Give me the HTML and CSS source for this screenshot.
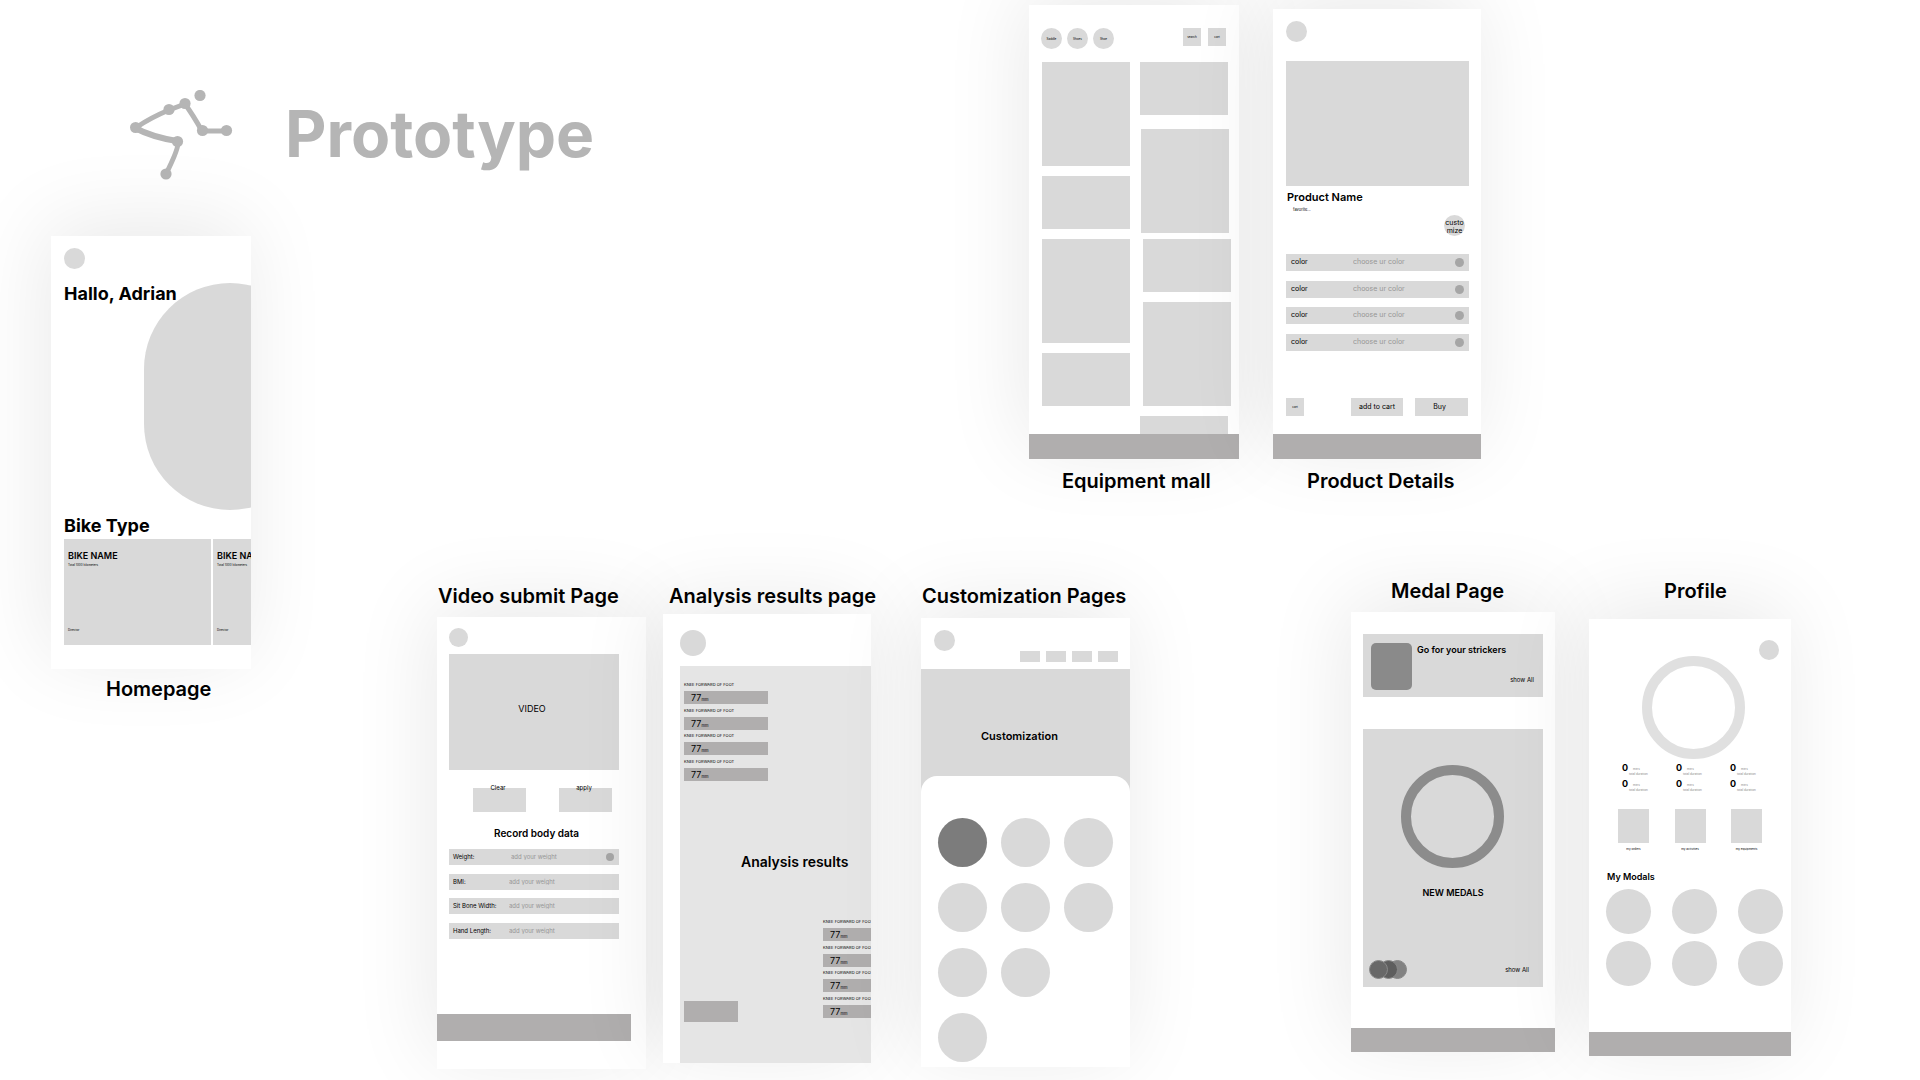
FILE: index.html
```html
<!DOCTYPE html>
<html lang="en">
<head>
<meta charset="utf-8">
<meta name="viewport" content="width=device-width, initial-scale=1">
<title>Prototype</title>
<link rel="stylesheet" href="styles.css">
</head>
<body>
<main class="canvas">
  <header class="brand">
    <svg class="logo" viewBox="0 0 104 92" width="104" height="92" aria-hidden="true">
      <g fill="none" stroke="#b5b5b5" stroke-width="5" stroke-linecap="round" stroke-linejoin="round">
        <path d="M55 14 39 20Q20 28 7 37"/>
        <path d="M5 38Q22 47 47 51" stroke-width="6"/>
        <path d="M48 52Q49 58 36 84"/>
        <path d="M55 14Q63 25 72 41H97"/>
      </g>
      <g fill="#b5b5b5">
        <circle cx="70" cy="5.5" r="5.6"/><circle cx="55" cy="13.5" r="5.6"/><circle cx="39" cy="19.5" r="5.6"/>
        <circle cx="5.6" cy="37.5" r="5.6"/><circle cx="72.5" cy="40.5" r="5.6"/><circle cx="96.5" cy="40.5" r="5.6"/>
        <circle cx="47.5" cy="51.5" r="5.6"/><circle cx="36" cy="84" r="5.6"/>
      </g>
    </svg>
    <h1 class="brand-title">Prototype</h1>
  </header>

  <figure class="frame frame-home">
    <div class="board board-home">
      <span class="avatar"></span>
      <span class="hero-shape"></span>
      <h2 class="greeting">Hallo, Adrian</h2>
      <h2 class="section-title">Bike Type</h2>
      <div class="bikes">
        <article class="bike"><h3 class="item-title">BIKE NAME</h3><p class="micro">Total 1000 kilometers</p><p class="micro bike-foot">Director</p></article>
        <article class="bike"><h3 class="item-title">BIKE NAME</h3><p class="micro">Total 1000 kilometers</p><p class="micro bike-foot">Director</p></article>
      </div>
    </div>
    <figcaption class="caption">Homepage</figcaption>
  </figure>

  <figure class="frame frame-mall">
    <div class="board board-mall">
      <nav class="mall-bar">
        <button class="chip">Saddle</button><button class="chip">Shoes</button><button class="chip">Shoe</button>
        <button class="square square-first">search</button><button class="square">cart</button>
      </nav>
      <div class="goods">
        <div class="goods-col">
          <div class="tile tall"></div><div class="tile"></div><div class="tile tall"></div><div class="tile"></div>
        </div>
        <div class="goods-col goods-right">
          <div class="tile"></div><div class="tile tall second"></div><div class="tile third"></div><div class="tile tall third"></div><div class="tile"></div>
        </div>
      </div>
      <div class="tabbar"></div>
    </div>
    <figcaption class="caption">Equipment mall</figcaption>
  </figure>

  <figure class="frame frame-product">
    <div class="board board-product">
      <span class="avatar"></span>
      <div class="product-image"></div>
      <h2 class="product-name">Product Name</h2>
      <p class="product-note">favorite...</p>
      <button class="customize">custo<br>mize</button>
      <form class="fields product-fields">
        <div class="field"><label for="c1">color</label><input id="c1" placeholder="choose ur color"><span class="dot"></span></div>
        <div class="field"><label for="c2">color</label><input id="c2" placeholder="choose ur color"><span class="dot"></span></div>
        <div class="field"><label for="c3">color</label><input id="c3" placeholder="choose ur color"><span class="dot"></span></div>
        <div class="field"><label for="c4">color</label><input id="c4" placeholder="choose ur color"><span class="dot"></span></div>
      </form>
      <div class="actions">
        <button class="square cart">cart</button><button class="action">add to cart</button><button class="action buy">Buy</button>
      </div>
      <div class="tabbar"></div>
    </div>
    <figcaption class="caption">Product Details</figcaption>
  </figure>

  <figure class="frame frame-video">
    <figcaption class="caption">Video submit Page</figcaption>
    <div class="board board-video">
      <span class="avatar"></span>
      <div class="video">VIDEO</div>
      <div class="video-actions"><button class="video-button">Clear</button><button class="video-button">apply</button></div>
      <h2 class="record-title">Record body data</h2>
      <form class="fields body-fields">
        <div class="field first"><label for="b1">Weight:</label><input id="b1" placeholder="add your weight"><span class="dot"></span></div>
        <div class="field"><label for="b2">BMI:</label><input id="b2" placeholder="add your weight"></div>
        <div class="field"><label for="b3">Sit Bone Width:</label><input id="b3" placeholder="add your weight"></div>
        <div class="field"><label for="b4">Hand Length:</label><input id="b4" placeholder="add your weight"></div>
      </form>
      <div class="tabbar"></div>
    </div>
  </figure>

  <figure class="frame frame-analysis">
    <figcaption class="caption">Analysis results page</figcaption>
    <div class="board board-analysis">
      <span class="avatar"></span>
      <section class="panel">
        <ul class="readings">
          <li>KNEE FORWARD OF FOOT<b>77<small>mm</small></b></li>
          <li>KNEE FORWARD OF FOOT<b>77<small>mm</small></b></li>
          <li>KNEE FORWARD OF FOOT<b>77<small>mm</small></b></li>
          <li>KNEE FORWARD OF FOOT<b>77<small>mm</small></b></li>
        </ul>
        <h2 class="panel-title">Analysis results</h2>
        <div class="panel-foot">
          <span class="panel-box"></span>
          <ul class="readings">
            <li>KNEE FORWARD OF FOOT<b>77<small>mm</small></b></li>
            <li>KNEE FORWARD OF FOOT<b>77<small>mm</small></b></li>
            <li>KNEE FORWARD OF FOOT<b>77<small>mm</small></b></li>
            <li>KNEE FORWARD OF FOOT<b>77<small>mm</small></b></li>
          </ul>
        </div>
      </section>
    </div>
  </figure>

  <figure class="frame frame-custom">
    <figcaption class="caption">Customization Pages</figcaption>
    <div class="board board-custom">
      <div class="custom-bar">
        <span class="avatar"></span>
        <div class="tabs"><span></span><span></span><span></span><span></span></div>
      </div>
      <div class="custom-hero"><h2 class="custom-title">Customization</h2></div>
      <div class="sheet">
        <span class="swatch selected"></span><span class="swatch"></span><span class="swatch"></span>
        <span class="swatch"></span><span class="swatch"></span><span class="swatch"></span>
        <span class="swatch"></span><span class="swatch"></span>
        <span class="swatch row-start"></span>
      </div>
    </div>
  </figure>

  <figure class="frame frame-medal">
    <figcaption class="caption">Medal Page</figcaption>
    <div class="board board-medal">
      <section class="sticker-card">
        <span class="sticker"></span>
        <div class="sticker-text"><h3 class="item-title">Go for your strickers</h3><a class="show-all" href="#stickers">show All</a></div>
      </section>
      <section class="medal-card">
        <span class="ring"></span>
        <h3 class="item-title">NEW MEDALS</h3>
        <div class="medal-foot">
          <div class="coins"><span class="coin"></span><span class="coin"></span><span class="coin"></span></div>
          <a class="show-all" href="#medals">show All</a>
        </div>
      </section>
      <div class="tabbar"></div>
    </div>
  </figure>

  <figure class="frame frame-profile">
    <figcaption class="caption">Profile</figcaption>
    <div class="board board-profile">
      <span class="avatar"></span>
      <span class="ring"></span>
      <div class="stats">
        <div class="stat"><b>0</b><p>mins</p><p>total duration</p></div>
        <div class="stat"><b>0</b><p>mins</p><p>total duration</p></div>
        <div class="stat"><b>0</b><p>mins</p><p>total duration</p></div>
        <div class="stat"><b>0</b><p>mins</p><p>total duration</p></div>
        <div class="stat"><b>0</b><p>mins</p><p>total duration</p></div>
        <div class="stat"><b>0</b><p>mins</p><p>total duration</p></div>
      </div>
      <div class="links">
        <a href="#orders"><span></span>my orders</a>
        <a href="#activities"><span></span>my activities</a>
        <a href="#equipments"><span></span>my equipments</a>
      </div>
      <h3 class="item-title modals-title">My Modals</h3>
      <div class="modals"><span></span><span></span><span></span><span></span><span></span><span></span></div>
      <div class="tabbar"></div>
    </div>
  </figure>
</main>
</body>
</html>
```
FILE: styles.css
```css
:root {
  --fill: #d9d9d9;
  --bar: #b0aeae;
  --dot: #a6a6a6;
  --muted: #969696;
}

* { box-sizing: border-box; margin: 0; padding: 0; }

body {
  font-family: Inter, "Liberation Sans", sans-serif;
  font-size: 7px;
  line-height: 8px;
  color: #000;
  background: #fff;
}

button, input {
  font: inherit;
  color: inherit;
  border: 0;
  border-radius: 0;
  background: none;
}

a { color: inherit; text-decoration: none; }
ul { list-style: none; }

.canvas { position: relative; min-height: 100vh; overflow: hidden; }

/* brand */
.brand { display: flex; align-items: flex-start; gap: 51px; padding: 90px 0 0 130px; }
.logo { flex: none; }
.brand-title { padding-top: 5px; font-size: 64px; line-height: 78px; font-weight: 700; color: #b5b5b5; }

/* frames placed on the free canvas */
.frame { position: absolute; }
.frame-home { left: 51px; top: 236px; width: 200px; }
.frame-mall { left: 1029px; top: 5px; width: 210px; }
.frame-product { left: 1273px; top: 9px; width: 208px; }
.frame-video { left: 437px; top: 584px; width: 209px; }
.frame-analysis { left: 663px; top: 584px; width: 208px; }
.frame-custom { left: 921px; top: 584px; width: 209px; }
.frame-medal { left: 1351px; top: 579px; width: 204px; }
.frame-profile { left: 1589px; top: 579px; width: 202px; }

.caption { position: relative; z-index: 1; font-size: 20px; line-height: 24px; font-weight: 600; white-space: nowrap; }
.frame-home .caption { padding: 8px 0 0 55px; }
.frame-mall .caption { padding: 10px 0 0 33px; }
.frame-product .caption { padding: 10px 0 0 34px; }
.frame-video .caption { padding: 0 0 9px 1px; }
.frame-analysis .caption { padding: 0 0 6px 6px; }
.frame-custom .caption { padding: 0 0 10px 1px; }
.frame-medal .caption { padding: 0 0 9px 40px; }
.frame-profile .caption { padding: 0 0 16px 75px; }

.board {
  position: relative;
  display: flex;
  flex-direction: column;
  background: #fff;
  box-shadow: -5px -12px 84px rgba(0, 0, 0, .09);
}
.avatar { flex: none; width: 21px; height: 21px; border-radius: 50%; background: var(--fill); }
.tabbar { flex: none; height: 25px; margin-top: auto; background: var(--bar); }
.item-title { font-size: 9px; line-height: 12px; font-weight: 600; white-space: nowrap; }
.micro { font-size: 3px; line-height: 6px; white-space: nowrap; }
.square { flex: none; width: 18px; height: 18px; font-size: 3px; background: var(--fill); }
.ring { flex: none; width: 103px; height: 103px; border: 10px solid #8c8c8c; border-radius: 50%; }
.show-all { font-size: 6px; line-height: 8px; }

/* homepage */
.board-home { min-height: 433px; padding: 12px 0 24px 13px; overflow: hidden; }
.hero-shape { position: absolute; left: 93px; top: 47px; width: 172px; height: 227px; border-radius: 86px; background: var(--fill); }
.greeting, .section-title { position: relative; font-size: 18px; line-height: 24px; font-weight: 700; white-space: nowrap; }
.greeting { margin-top: 13px; }
.section-title { margin-top: 208px; }
.bikes { display: flex; gap: 2px; margin-top: 1px; }
.bike { display: flex; flex: none; flex-direction: column; width: 147px; height: 106px; padding: 11px 4px 12px; background: var(--fill); }
.bike-foot { margin-top: auto; }

/* equipment mall */
.board-mall { height: 454px; padding-top: 23px; overflow: hidden; }
.mall-bar { display: flex; gap: 5px; padding: 0 13px 0 12px; }
.chip { width: 21px; height: 21px; border-radius: 50%; font-size: 3px; background: var(--fill); }
.square-first { margin: 0 2px 0 auto; }
.goods { display: flex; flex: 1; gap: 10px; min-height: 0; padding: 13px 0 0 13px; overflow: hidden; }
.goods-col { display: flex; flex-direction: column; gap: 10px; }
.tile { flex: none; width: 88px; height: 53px; background: var(--fill); }
.tall { height: 104px; }
.goods-right .second { margin: 4px 0 -4px 1px; }
.goods-right .third { margin-left: 3px; }

/* product details */
.board-product { height: 450px; padding-top: 12px; }
.board-product > .avatar { margin-left: 13px; }
.product-image { flex: none; height: 125px; margin: 19px 12px 0 13px; background: var(--fill); }
.product-name { margin: 4px 0 0 14px; font-size: 11px; line-height: 14px; font-weight: 600; }
.product-note { margin: 3px 0 0 20px; font-size: 4px; line-height: 6px; }
.customize { align-self: flex-end; width: 21px; height: 21px; margin: 2px 16px 0 0; padding-top: 2px; border-radius: 50%; line-height: 8px; background: var(--fill); }
.fields { display: flex; flex-direction: column; justify-content: space-between; }
.field { display: flex; align-items: center; background: var(--fill); }
.field label, .field input { margin-bottom: 1px; font-size: 7px; line-height: 8px; white-space: nowrap; }
.field input { flex: 1; min-width: 0; height: 8px; }
.field input::placeholder { color: var(--muted); opacity: 1; }
.dot { flex: none; width: 9px; height: 9px; border-radius: 50%; background: var(--dot); }
.product-fields { height: 97px; margin: 18px 12px 0 13px; }
.product-fields .field { height: 17px; padding: 0 5px; }
.product-fields label { width: 62px; }
.actions { display: flex; gap: 12px; margin: 47px 13px 0; }
.cart { margin-right: auto; }
.action { width: 52px; height: 18px; background: var(--fill); }
.buy { width: 53px; padding-right: 4px; }

/* video submit */
.board-video { height: 452px; padding: 11px 0 28px; }
.board-video > .avatar { width: 19px; height: 19px; margin-left: 12px; }
.video { display: grid; place-items: center; height: 116px; margin: 7px 27px 0 12px; padding: 0 4px 6px 0; font-size: 9px; line-height: 12px; background: var(--fill); }
.video-actions { display: flex; gap: 33px; margin: 18px 0 0 36px; }
.video-button { display: flex; justify-content: center; width: 53px; height: 24px; padding-right: 3px; line-height: 0; font-size: 6px; background: var(--fill); }
.record-title { margin: 14px 0 0 57px; font-size: 10px; line-height: 14px; font-weight: 600; }
.body-fields { height: 90px; margin: 9px 27px 0 12px; }
.body-fields .field { height: 16px; padding: 0 5px 0 4px; }
.body-fields label, .body-fields input { margin-bottom: 0; font-size: 6px; }
.body-fields label { width: 56px; }
.body-fields .first label { width: 58px; }
.body-fields .dot { width: 8px; height: 8px; }
.board-video .tabbar { width: 194px; height: 27px; }

/* analysis results */
.board-analysis { height: 449px; padding: 16px 0 0 17px; overflow: hidden; }
.board-analysis > .avatar { width: 26px; height: 26px; }
.panel { flex: 1; margin-top: 10px; padding: 16px 0 0 4px; overflow: hidden; background: #e5e5e5; }
.readings { display: flex; flex: none; flex-direction: column; justify-content: space-between; width: 84px; height: 99px; font-size: 4px; line-height: 6px; }
.readings b { display: block; height: 13px; margin-top: 3px; padding-left: 7px; font-size: 9px; line-height: 13px; font-weight: 400; background: var(--bar); }
.readings small { font-size: 4px; }
.panel-title { margin: 72px 0 0 57px; font-size: 14px; line-height: 18px; font-weight: 600; white-space: nowrap; }
.panel-foot { display: flex; gap: 85px; height: 103px; margin-top: 48px; }
.panel-box { flex: none; align-self: flex-end; width: 54px; height: 21px; background: var(--bar); }

/* customization */
.board-custom { height: 449px; }
.custom-bar { display: flex; justify-content: space-between; height: 51px; padding: 12px 12px 7px 13px; }
.tabs { display: flex; align-items: flex-end; gap: 6px; }
.tabs span { width: 20px; height: 11px; background: var(--fill); }
.custom-hero { height: 123px; padding: 60px 0 0 60px; background: var(--fill); }
.custom-title { font-size: 11px; line-height: 14px; font-weight: 600; }
.sheet { position: relative; display: grid; flex: 1; grid-template-columns: repeat(3, 49px); grid-auto-rows: 49px; gap: 16px 14px; margin-top: -16px; padding: 42px 0 0 17px; border-radius: 16px 16px 0 0; background: #fff; }
.swatch { border-radius: 50%; background: var(--fill); }
.selected { background: #7c7c7c; }
.row-start { grid-column: 1; }

/* medal page */
.board-medal { height: 440px; padding-top: 22px; }
.sticker-card { display: flex; gap: 5px; height: 63px; margin: 0 12px; padding: 9px 9px 7px 8px; background: var(--fill); }
.sticker { flex: none; width: 41px; height: 47px; border-radius: 5px; background: #8a8a8a; }
.sticker-text { display: flex; flex: 1; flex-direction: column; justify-content: space-between; align-items: flex-start; padding: 1px 0 6px; }
.sticker-text .show-all { align-self: flex-end; }
.medal-card { display: flex; flex-direction: column; align-items: center; height: 258px; margin: 32px 12px 0; padding: 36px 14px 8px 6px; background: var(--fill); }
.medal-card .item-title { margin-top: 19px; padding-left: 8px; }
.medal-card .ring { margin-left: 7px; }
.medal-foot { display: flex; justify-content: space-between; align-items: center; width: 100%; margin-top: auto; }
.coins { display: flex; }
.coin { position: relative; z-index: 3; width: 19px; height: 19px; border: 1px solid #888; border-radius: 50%; background: #686868; }
.coin + .coin { z-index: 2; margin-left: -9px; background: #5e5e5e; }
.coin + .coin + .coin { z-index: 1; margin-left: -10px; background: #828282; }
.board-medal .tabbar, .board-profile .tabbar { height: 24px; }

/* profile */
.board-profile { height: 437px; padding-top: 21px; }
.board-profile > .avatar { align-self: flex-end; width: 20px; height: 20px; margin-right: 12px; }
.board-profile .ring { margin: -4px 0 0 53px; border-color: #e0e0e0; }
.stats { display: grid; grid-template-columns: repeat(3, 54px); grid-auto-rows: 14px; gap: 2px 0; margin: 4px 0 0 33px; }
.stat { display: grid; grid-template-columns: 7px 1fr; grid-template-rows: 5px 5px; padding-top: 4px; font-size: 3px; line-height: 5px; color: #888; white-space: nowrap; }
.stat b { grid-row: 1 / 3; margin-top: -4px; font-size: 9px; line-height: 10px; font-weight: 700; color: #000; }
.stat b + p { padding-left: 4px; }
.links { display: flex; justify-content: space-between; width: 148px; margin: 16px 0 0 27px; }
.links a { width: 35px; font-size: 3px; line-height: 5px; text-align: center; white-space: nowrap; }
.links span { display: block; width: 31px; height: 34px; margin: 0 auto 4px; background: var(--fill); }
.modals-title { margin: 19px 0 0 18px; }
.modals { display: grid; grid-template-columns: repeat(3, 45px); grid-auto-rows: 45px; gap: 7px 21px; margin: 6px 0 0 17px; }
.modals span { border-radius: 50%; background: var(--fill); }
```
